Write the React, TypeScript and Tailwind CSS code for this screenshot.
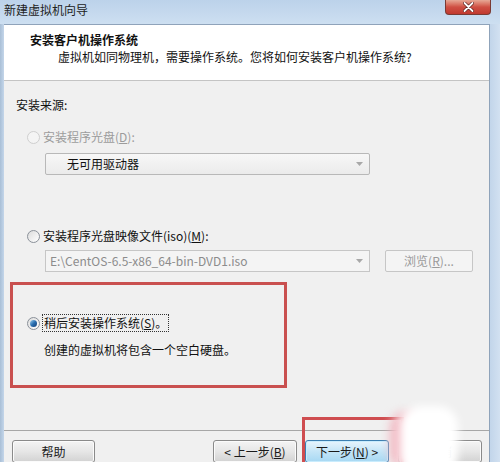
import React from 'react'

const font = 'font-["Noto_Sans_CJK_SC","Noto_Sans",sans-serif]'

function Radio({ checked, disabled }: { checked?: boolean; disabled?: boolean }) {
  return (
    <span
      className={
        'flex h-[13px] w-[13px] shrink-0 items-center justify-center rounded-full border ' +
        (disabled
          ? 'border-[#cfcfcf] bg-[#f4f4f4]'
          : 'border-[#8a9099] bg-gradient-to-br from-[#dcdcdc] to-[#ffffff]')
      }
    >
      {checked && (
        <span className="h-[7px] w-[7px] rounded-full bg-gradient-to-br from-[#9ad0f0] via-[#2a6fb0] to-[#163f78]" />
      )}
    </span>
  )
}

function Arrow({ light }: { light?: boolean }) {
  return (
    <svg width="7" height="4" viewBox="0 0 7 4" className="shrink-0">
      <path d="M0 0 L7 0 L3.5 4 Z" fill={light ? '#a8a8a8' : '#7a7a7a'} />
    </svg>
  )
}

function WinButton({ children, width, primary }: { children: React.ReactNode; width: string; primary?: boolean }) {
  return (
    <div
      className={
        `${width} flex h-[23px] shrink-0 items-center justify-center rounded-[3px] border text-[12px] leading-[14px] text-[#1a1a1a] ` +
        (primary
          ? 'border-[#3c7fb1] bg-gradient-to-b from-[#e8f5fd] via-[#c4e5f7] to-[#a6d8f3] shadow-[inset_0_0_0_1px_#c9ecfd]'
          : 'border-[#8a8a8a] bg-gradient-to-b from-[#f4f4f4] via-[#e6e6e6] to-[#d2d2d2] shadow-[inset_0_0_0_1px_#fbfbfb]')
      }
    >
      {children}
    </div>
  )
}

export default function App() {
  return (
    <div className={`relative flex h-[462px] w-[500px] flex-col overflow-hidden bg-[#c6d8ec] ${font}`}>
      {/* Title bar */}
      <div className="flex h-[24px] shrink-0 items-start justify-between bg-gradient-to-b from-[#bcd2ea] to-[#cddff1] pl-[4px] pr-[9px]">
        <span className="mt-[3px] text-[12px] leading-[14px] text-[#222]">新建虚拟机向导</span>
        <div className="flex h-[15px] w-[46px] items-center justify-center rounded-b-[4px] border border-t-0 border-[#7a3a33] bg-gradient-to-b from-[#e6a896] via-[#cf4f43] to-[#c0392f]">
          <svg width="11" height="10" viewBox="0 0 11 10">
            <path d="M1.5 1 L9.5 9 M9.5 1 L1.5 9" stroke="#5a1f1a" strokeWidth="3.2" strokeLinecap="round" />
            <path d="M1.5 1 L9.5 9 M9.5 1 L1.5 9" stroke="#ffffff" strokeWidth="1.8" strokeLinecap="round" />
          </svg>
        </div>
      </div>

      {/* Body */}
      <div className="flex min-h-0 flex-1">
        <div className="w-[4px] shrink-0 bg-gradient-to-r from-[#a9bfd6] to-[#c4d6ea]" />
        <div className="flex w-[486px] shrink-0 flex-col border-r border-t border-[#8fa3ba] bg-[#f0f0f0]">
          {/* Header */}
          <div className="h-[56px] shrink-0 border-b border-[#c4c4c4] bg-white pt-[8px]">
            <div className="pl-[26px] text-[12px] font-bold leading-[14px] text-[#111]">安装客户机操作系统</div>
            <div className="mt-[3px] pl-[54px] text-[12px] leading-[14px] text-[#111]">
              虚拟机如同物理机，需要操作系统。您将如何安装客户机操作系统?
            </div>
          </div>

          {/* Content */}
          <div className="flex flex-1 flex-col text-[12px] leading-[14px] text-[#111]">
            <div className="ml-[12px] mt-[17px]">安装来源:</div>

            <div className="ml-[23px] mt-[18px] flex h-[14px] items-center gap-[3px] text-[#9c9c9c]">
              <Radio disabled />
              <span>
                安装程序光盘(<u>D</u>):
              </span>
            </div>

            <div className="ml-[41px] mt-[9px] flex h-[22px] w-[325px] items-center justify-between rounded-[2px] border border-[#b8b8b8] bg-gradient-to-b from-[#f7f7f7] to-[#ebebeb] pl-[21px] pr-[6px]">
              <span>无可用驱动器</span>
              <Arrow light />
            </div>

            <div className="ml-[23px] mt-[54px] flex h-[14px] items-center gap-[3px]">
              <Radio />
              <span>
                安装程序光盘映像文件(iso)(<u>M</u>):
              </span>
            </div>

            <div className="mt-[7px] flex h-[22px] items-center">
              <div className="ml-[41px] flex h-[22px] w-[325px] items-center justify-between border border-[#c6c6c6] bg-[#f4f4f4] pl-[4px] pr-[6px] text-[#8c8c8c]">
                <span>E:\CentOS-6.5-x86_64-bin-DVD1.iso</span>
                <Arrow light />
              </div>
              <div className="ml-[15px] flex h-[22px] w-[88px] items-center justify-center rounded-[2px] border border-[#c6c6c6] bg-[#f4f4f4] text-[#9a9a9a]">
                浏览(<u>R</u>)...
              </div>
            </div>

            <div className="ml-[6px] mt-[10px] h-[106px] w-[277px] border-[3px] border-[#c9504f]">
              <div className="ml-[14px] mt-[29px] flex h-[18px] items-center gap-[2px]">
                <Radio checked />
                <span className="flex h-[18px] items-center border border-dotted border-[#333] px-[1px]">
                  稍后安装操作系统(<u>S</u>)。
                </span>
              </div>
              <div className="ml-[31px] mt-[11px]">创建的虚拟机将包含一个空白硬盘。</div>
            </div>

            <div className="mt-[42px] h-[1px] w-full bg-[#a7a7a7]" />

            <div className="mt-[9px] flex">
              <div className="ml-[8px]">
                <WinButton width="w-[83px]">帮助</WinButton>
              </div>
              <div className="ml-[118px] flex gap-[8px]">
                <WinButton width="w-[84px]">
                  &lt; 上一步(<u>B</u>)
                </WinButton>
                <WinButton width="w-[84px]" primary>
                  下一步(<u>N</u>) &gt;
                </WinButton>
                <div className="ml-[1px]">
                  <WinButton width="w-[84px]">取消</WinButton>
                </div>
              </div>
            </div>
          </div>
        </div>
        <div className="w-[10px] shrink-0 bg-gradient-to-r from-[#c2d5ea] to-[#d2e1f1]" />
      </div>

      {/* Annotation over the next button */}
      <div className="pointer-events-none absolute left-[302px] top-[417px] h-[60px] w-[102px] border-[3px] border-[#cf4d50]" />
      <div className="pointer-events-none absolute left-[390px] top-[412px] h-[56px] w-[30px] rounded-full bg-[#f2b8c2] blur-[5px]" />
      <div className="pointer-events-none absolute left-[400px] top-[406px] h-[70px] w-[58px] rounded-[20px] bg-white blur-[4px]" />
    </div>
  )
}
